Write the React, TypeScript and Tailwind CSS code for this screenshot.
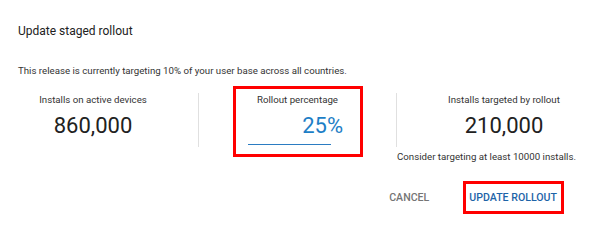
export default function App() {
  return (
    <div className="w-[600px] h-[230px] bg-white font-['Roboto',sans-serif] text-[#212121] relative overflow-hidden">
      <h2 className="pl-[18px] pt-[24px] text-[12px] leading-[14px] text-[#212121]">Update staged rollout</h2>
      <p className="pl-[18px] mt-[27px] text-[9.7px] leading-[12px] text-[#333]">
        This release is currently targeting 10% of your user base across all countries.
      </p>
      <div className="flex mt-[16px]">
        <div className="w-[199px] shrink-0 pr-[12px] h-[54px] pt-[1px] border-r border-[#e0e0e0] flex flex-col items-center">
          <span className="text-[9.7px] leading-[12px] text-[#333]">Installs on active devices</span>
          <span className="text-[22px] leading-[26px] mt-[7px] text-[#212121]">860,000</span>
        </div>
        <div className="w-[198px] shrink-0 h-[54px] pt-[1px] border-r border-[#e0e0e0] flex flex-col">
          <span className="self-center text-[9.7px] leading-[12px] text-[#333]">Rollout percentage</span>
          <div className="ml-[49px] w-[83px] h-[32px] mt-[7px] border-b border-[#2b7cc2] flex justify-end items-start">
            <span className="text-[22px] leading-[26px] text-[#1d7ec6] -mr-[12px]">25%</span>
          </div>
        </div>
        <div className="w-[214px] shrink-0 pt-[1px] flex flex-col items-center">
          <span className="text-[9.7px] leading-[12px] text-[#333]">Installs targeted by rollout</span>
          <span className="text-[22px] leading-[26px] mt-[7px] text-[#212121]">210,000</span>
          <span className="self-start mt-[12px] text-[9.7px] leading-[12px] text-[#333]">
            Consider targeting at least 10000 installs.
          </span>
        </div>
      </div>
      <div className="flex justify-end items-center gap-[40px] pr-[43px] mt-[29px]">
        <span className="text-[10.6px] leading-[12px] font-medium text-[#757575]">CANCEL</span>
        <span className="text-[10.6px] leading-[12px] font-medium text-[#1d64a8]">UPDATE ROLLOUT</span>
      </div>
      <div className="absolute left-[233px] top-[86px] w-[130px] h-[71px] border-[3px] border-[#f00]" />
      <div className="absolute left-[463px] top-[181px] w-[101px] h-[33px] border-[3px] border-[#f00]" />
    </div>
  );
}
